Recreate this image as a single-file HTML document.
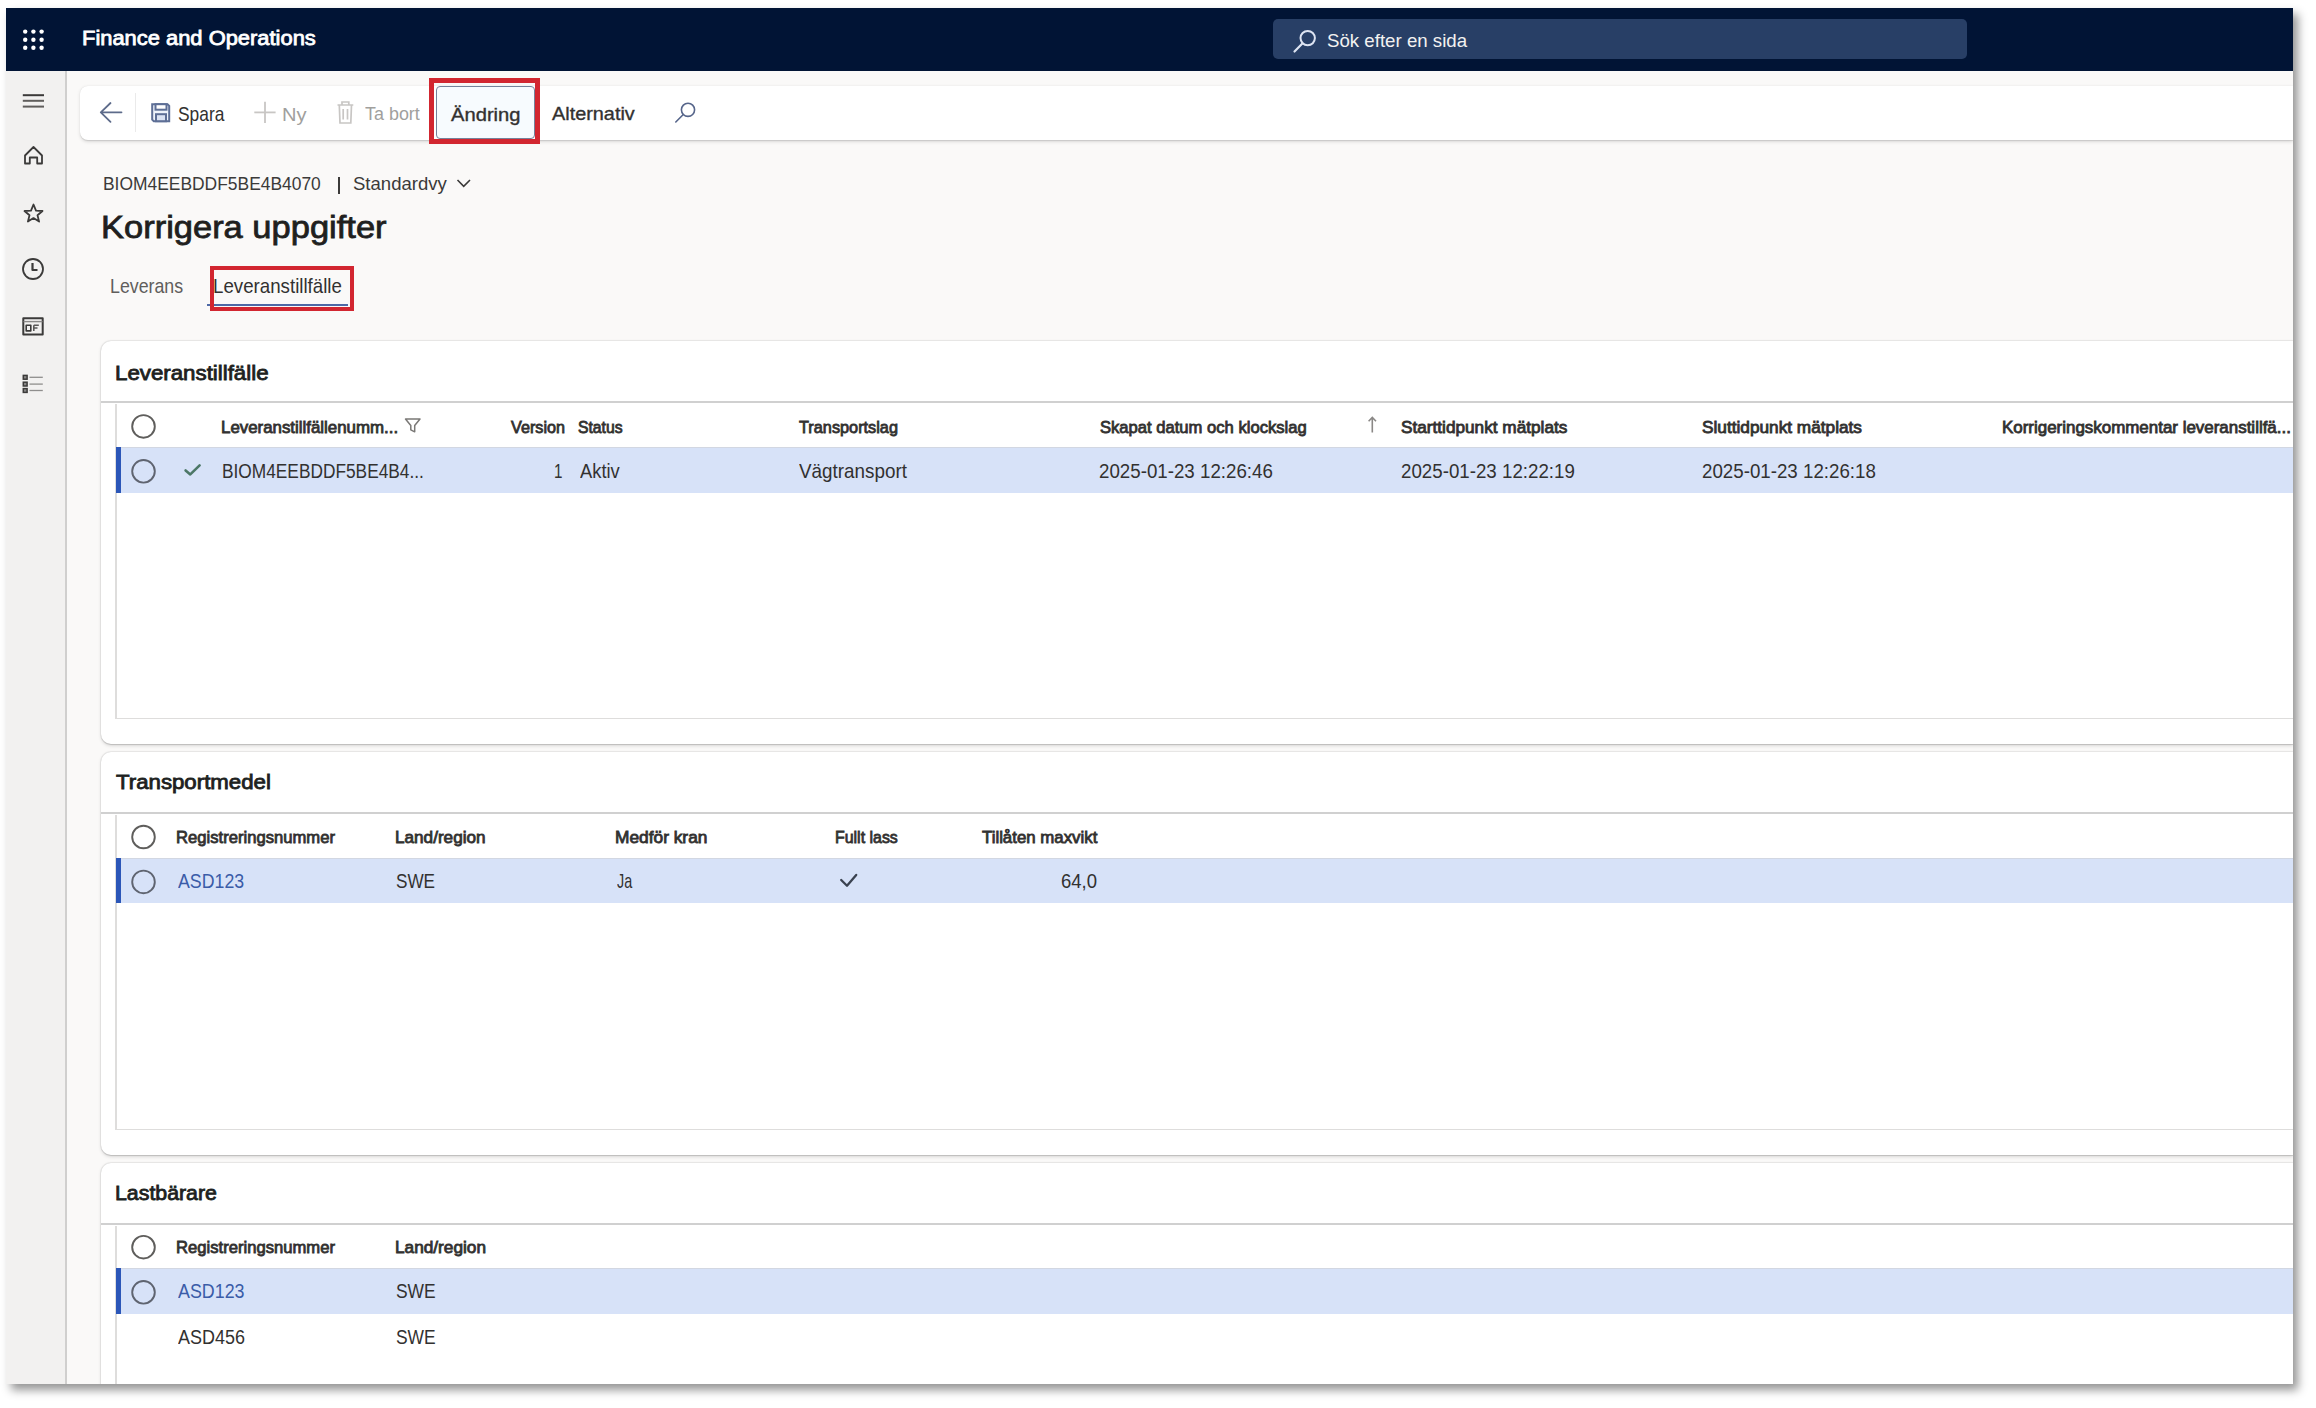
<!DOCTYPE html><html><head><meta charset="utf-8"><style>
html,body{margin:0;padding:0;}
body{width:2316px;height:1408px;overflow:hidden;position:relative;background:#fff;font-family:"Liberation Sans",sans-serif;}
.t{position:absolute;white-space:nowrap;transform-origin:0 0;}
#clip{position:absolute;left:6px;top:8px;width:2287px;height:1376px;overflow:hidden;}
#inner{position:absolute;left:-6px;top:-8px;width:2316px;height:1408px;}
.a{position:absolute;}
svg{position:absolute;overflow:visible;}
</style></head><body>
<div class="a" style="left:6px;top:8px;width:2287px;height:1376px;background:#faf9f8;box-shadow:5px 6px 9px rgba(0,0,0,0.42);"></div>
<div id="clip"><div id="inner">
<!-- window -->

<!-- top bar -->
<div class="a" style="left:6px;top:8px;width:2287px;height:63px;background:#011435;"></div>
<svg style="left:0;top:0" width="60" height="60">
<g fill="#ffffff">
<circle cx="25.2" cy="31.6" r="2.2"/><circle cx="33.4" cy="31.6" r="2.2"/><circle cx="41.6" cy="31.6" r="2.2"/>
<circle cx="25.2" cy="39.7" r="2.2"/><circle cx="33.4" cy="39.7" r="2.2"/><circle cx="41.6" cy="39.7" r="2.2"/>
<circle cx="25.2" cy="47.8" r="2.2"/><circle cx="33.4" cy="47.8" r="2.2"/><circle cx="41.6" cy="47.8" r="2.2"/>
</g></svg>
<div class="a" style="left:1273px;top:19px;width:694px;height:40px;border-radius:5px;background:#283f66;"></div>
<svg style="left:0;top:0" width="1400" height="80">
<circle cx="1307.7" cy="38.1" r="7.2" fill="none" stroke="#dde4f2" stroke-width="2"/>
<line x1="1294.5" y1="51.5" x2="1302.6" y2="43.3" stroke="#dde4f2" stroke-width="2.2" stroke-linecap="round"/>
</svg>
<!-- sidebar -->
<div class="a" style="left:6px;top:71px;width:60px;height:1313px;background:#f2f1f0;"></div>
<div class="a" style="left:65px;top:71px;width:1.8px;height:1313px;background:#d0cfce;"></div>
<svg style="left:0;top:0" width="70" height="420">
<g stroke="#3b3a39" stroke-width="2" fill="none">
<line x1="22.8" y1="95.2" x2="44" y2="95.2"/><line x1="22.8" y1="100.8" x2="44" y2="100.8" stroke="#605e5c"/><line x1="22.8" y1="106.6" x2="44" y2="106.6" stroke="#605e5c"/>
</g>
<g stroke="#3b3a39" stroke-width="1.8" fill="none" stroke-linejoin="round">
<!-- home -->
<path d="M25 155.5 L33.5 147 L42 155.5 V163.5 H37.2 V157.5 H29.8 V163.5 H25 Z"/>
<!-- star -->
<path d="M33.5 204.5 L36 210.6 L42.5 211 L37.5 215.2 L39.1 221.6 L33.5 218.1 L27.9 221.6 L29.5 215.2 L24.5 211 L31 210.6 Z"/>
<!-- clock -->
<circle cx="33" cy="269" r="10"/>
<path d="M32.5 263 V270 H37.5" stroke-width="2.2"/>
<!-- workspace -->
<rect x="23.3" y="318.2" width="19.4" height="16.3" stroke-width="2"/>
<line x1="23.5" y1="321.6" x2="42.5" y2="321.6" stroke="#8a8988" stroke-width="1.4"/>
<rect x="26.2" y="325.3" width="4.6" height="5.6" stroke-width="1.6"/>
<path d="M33.8 325.3 H38.8 M33.8 328 H37.5 M33.8 325.3 V331" stroke-width="1.6" stroke="#5a5958"/>
</g>
<g fill="#8a8988" stroke="#3b3a39" stroke-width="1.5">
<rect x="23.3" y="375.4" width="3.8" height="3.8"/><rect x="23.3" y="382.2" width="3.8" height="3.8"/><rect x="23.3" y="388.6" width="3.8" height="3.8"/>
</g>
<g stroke="#8f8e8d" stroke-width="1.3">
<line x1="29.5" y1="377.3" x2="42.8" y2="377.3"/><line x1="29.5" y1="384.1" x2="42.8" y2="384.1"/><line x1="29.5" y1="390.5" x2="42.8" y2="390.5"/>
</g>
</svg>
<!-- toolbar card -->
<div class="a" style="left:80px;top:85.5px;width:2213px;height:54px;border-radius:8px 0 0 8px;background:#ffffff;box-shadow:0 1.6px 3.6px rgba(0,0,0,0.12),0 0.3px 0.9px rgba(0,0,0,0.10);"></div>
<div class="a" style="left:135px;top:92.5px;width:1.2px;height:39px;background:#eaeaea;"></div>
<svg style="left:0;top:0" width="720" height="150">
<g stroke="#5d6b8a" stroke-width="1.8" fill="none" stroke-linecap="round" stroke-linejoin="round">
<path d="M121.5 112.3 H100.8 M110.5 103 L100.8 112.3 L110.5 121.8"/>
</g>
<!-- save -->
<g stroke="#5e6f96" stroke-width="2" fill="none">
<path d="M152.2 104.2 H167.5 L169.2 105.9 V121.2 H153.8 L152.2 119.6 Z" fill="#eef3fb"/>
<rect x="155.5" y="104.2" width="11" height="5.5" fill="#ffffff"/>
<rect x="156" y="114.2" width="10" height="7" fill="#dbe3f3"/>
</g>
<!-- plus -->
<g stroke="#c8c6c4" stroke-width="1.8">
<line x1="265" y1="101.8" x2="265" y2="123"/><line x1="254.3" y1="112.4" x2="275.6" y2="112.4"/>
</g>
<!-- trash -->
<g stroke="#c8c6c4" stroke-width="1.7" fill="none">
<path d="M337.5 105 H353.3 M342 105 V102 H348.8 V105 M339.3 105 L340 123 H350.8 L351.5 105 M343.2 109 V119.5 M347.5 109 V119.5"/>
</g>
<!-- search -->
<g stroke="#56658a" stroke-width="1.6" fill="none" stroke-linecap="round">
<circle cx="688" cy="109.8" r="6.6"/>
<line x1="675.8" y1="122" x2="683.3" y2="114.5"/>
</g>
</svg>
<!-- Andring button + red box -->
<div class="a" style="left:435.5px;top:85.5px;width:97.5px;height:51.5px;border:1.6px solid #75829b;border-radius:4px;background:#f7fbfe;"></div>
<div class="a" style="left:429px;top:78px;width:101px;height:56px;border:5px solid #d22630;"></div>
<!-- breadcrumb separators -->
<div class="a" style="left:338.2px;top:177px;width:1.8px;height:16.5px;background:#3b3a39;"></div>
<svg style="left:0;top:0" width="500" height="200">
<path d="M457.5 180 L463.7 186.3 L470 180" stroke="#3b3a39" stroke-width="1.6" fill="none"/>
</svg>
<!-- tabs underline + red box -->
<div class="a" style="left:207px;top:303.7px;width:140.5px;height:2.6px;background:#4d69a6;"></div>
<div class="a" style="left:210px;top:266px;width:136px;height:37px;border:4px solid #d22630;"></div>
<!-- panels -->
<div class="a" style="left:101px;top:341px;width:2192px;height:403px;border-radius:10px 0 0 10px;background:#ffffff;box-shadow:0 0 0 1px rgba(0,0,0,0.045),0 1.6px 3.6px rgba(0,0,0,0.13),0 0.3px 0.9px rgba(0,0,0,0.11);"></div>
<div class="a" style="left:101px;top:401.3px;width:2192px;height:2.2px;background:#d0d0d0;"></div>
<div class="a" style="left:115px;top:403.9px;width:1.5px;height:314.1px;background:#dedddc;"></div>
<div class="a" style="left:115px;top:717.5px;width:2178px;height:1.6px;background:#dedddc;"></div>
<div class="a" style="left:116.4px;top:447.3px;width:2177px;height:45.4px;background:#d7e2f8;"></div>
<div class="a" style="left:116.4px;top:447.0px;width:2177px;height:1.3px;background:#d2d7e2;"></div>
<div class="a" style="left:116.2px;top:447.3px;width:5.3px;height:45.4px;background:#2b56b8;"></div>
<svg style="left:0;top:0" width="200" height="1408"><circle cx="143.5" cy="426.4" r="11.3" fill="none" stroke="#5f5e5c" stroke-width="1.9"/><circle cx="143.5" cy="471.3" r="11.3" fill="none" stroke="#5f6470" stroke-width="1.9"/></svg>
<div class="a" style="left:101px;top:752px;width:2192px;height:403px;border-radius:10px 0 0 10px;background:#ffffff;box-shadow:0 0 0 1px rgba(0,0,0,0.045),0 1.6px 3.6px rgba(0,0,0,0.13),0 0.3px 0.9px rgba(0,0,0,0.11);"></div>
<div class="a" style="left:101px;top:812.3px;width:2192px;height:2.2px;background:#d0d0d0;"></div>
<div class="a" style="left:115px;top:814.9px;width:1.5px;height:314.1px;background:#dedddc;"></div>
<div class="a" style="left:115px;top:1128.5px;width:2178px;height:1.6px;background:#dedddc;"></div>
<div class="a" style="left:116.4px;top:857.9px;width:2177px;height:45.4px;background:#d7e2f8;"></div>
<div class="a" style="left:116.4px;top:857.6px;width:2177px;height:1.3px;background:#d2d7e2;"></div>
<div class="a" style="left:116.2px;top:857.9px;width:5.3px;height:45.4px;background:#2b56b8;"></div>
<svg style="left:0;top:0" width="200" height="1408"><circle cx="143.5" cy="837.0" r="11.3" fill="none" stroke="#5f5e5c" stroke-width="1.9"/><circle cx="143.5" cy="881.9" r="11.3" fill="none" stroke="#5f6470" stroke-width="1.9"/></svg>
<div class="a" style="left:101px;top:1163px;width:2192px;height:257px;border-radius:10px 0 0 10px;background:#ffffff;box-shadow:0 0 0 1px rgba(0,0,0,0.045),0 1.6px 3.6px rgba(0,0,0,0.13),0 0.3px 0.9px rgba(0,0,0,0.11);"></div>
<div class="a" style="left:101px;top:1223.3px;width:2192px;height:2.2px;background:#d0d0d0;"></div>
<div class="a" style="left:115px;top:1225.9px;width:1.5px;height:158.1px;background:#dedddc;"></div>
<div class="a" style="left:116.4px;top:1268.3px;width:2177px;height:45.4px;background:#d7e2f8;"></div>
<div class="a" style="left:116.4px;top:1268.0px;width:2177px;height:1.3px;background:#d2d7e2;"></div>
<div class="a" style="left:116.2px;top:1268.3px;width:5.3px;height:45.4px;background:#2b56b8;"></div>
<svg style="left:0;top:0" width="200" height="1408"><circle cx="143.5" cy="1247.2" r="11.3" fill="none" stroke="#5f5e5c" stroke-width="1.9"/><circle cx="143.5" cy="1292.3" r="11.3" fill="none" stroke="#5f6470" stroke-width="1.9"/></svg>
<svg style="left:0;top:0" width="1400" height="500">
<path d="M185.6 470.4 L190.3 474.4 L199.6 465.4" stroke="#4c7767" stroke-width="2.6" fill="none" stroke-linecap="round" stroke-linejoin="round"/>
<path d="M405.5 419 H420 L414.7 425.5 V431.8 L410.8 429.8 V425.5 Z" stroke="#7a7876" stroke-width="1.5" fill="none" stroke-linejoin="round"/>
<path d="M1372.3 432.5 V417.5 M1368.6 421.2 L1372.3 417.5 L1376 421.2" stroke="#8a8886" stroke-width="1.6" fill="none"/>
</svg>
<svg style="left:0;top:0" width="1000" height="900">
<path d="M841.2 880 L847 885.8 L856.2 875" stroke="#3a4250" stroke-width="2.3" fill="none" stroke-linecap="round" stroke-linejoin="round"/>
</svg>
<div class="t" style="left:82.00px;top:28.37px;font-size:20.581px;line-height:20.581px;transform:scaleX(1.0644);color:#ffffff;font-weight:normal;-webkit-text-stroke:0.80px #ffffff">Finance and Operations</div>
<div class="t" style="left:1327.00px;top:33.18px;font-size:17.733px;line-height:17.733px;transform:scaleX(1.0536);color:#f3f2f1;font-weight:normal">Sök efter en sida</div>
<div class="t" style="left:177.60px;top:105.18px;font-size:19.622px;line-height:19.622px;transform:scaleX(0.8859);color:#323130;font-weight:normal">Spara</div>
<div class="t" style="left:281.60px;top:104.95px;font-size:19.186px;line-height:19.186px;transform:scaleX(1.0472);color:#a19f9d;font-weight:normal">Ny</div>
<div class="t" style="left:365.40px;top:105.32px;font-size:18.750px;line-height:18.750px;transform:scaleX(0.9561);color:#a19f9d;font-weight:normal">Ta bort</div>
<div class="t" style="left:450.80px;top:105.67px;font-size:18.343px;line-height:18.343px;transform:scaleX(1.1009);color:#323130;font-weight:normal;-webkit-text-stroke:0.35px #323130">Ändring</div>
<div class="t" style="left:552.00px;top:105.30px;font-size:18.779px;line-height:18.779px;transform:scaleX(1.0581);color:#323130;font-weight:normal;-webkit-text-stroke:0.35px #323130">Alternativ</div>
<div class="t" style="left:102.60px;top:176.23px;font-size:17.442px;line-height:17.442px;transform:scaleX(0.9987);color:#3b3a39;font-weight:normal">BIOM4EEBDDF5BE4B4070</div>
<div class="t" style="left:353.20px;top:176.23px;font-size:17.442px;line-height:17.442px;transform:scaleX(1.0635);color:#3b3a39;font-weight:normal">Standardvy</div>
<div class="t" style="left:100.80px;top:212.09px;font-size:31.773px;line-height:31.773px;transform:scaleX(1.0853);color:#201f1e;font-weight:normal;-webkit-text-stroke:0.80px #201f1e">Korrigera uppgifter</div>
<div class="t" style="left:109.80px;top:276.66px;font-size:19.767px;line-height:19.767px;transform:scaleX(0.9004);color:#605e5c;font-weight:normal">Leverans</div>
<div class="t" style="left:213.00px;top:276.66px;font-size:19.767px;line-height:19.767px;transform:scaleX(0.9470);color:#323130;font-weight:normal">Leveranstillfälle</div>
<div class="t" style="left:115.00px;top:363.59px;font-size:19.855px;line-height:19.855px;transform:scaleX(1.1226);color:#201f1e;font-weight:normal;-webkit-text-stroke:0.80px #201f1e">Leveranstillfälle</div>
<div class="t" style="left:116.00px;top:773.31px;font-size:19.709px;line-height:19.709px;transform:scaleX(1.1292);color:#201f1e;font-weight:normal;-webkit-text-stroke:0.80px #201f1e">Transportmedel</div>
<div class="t" style="left:115.00px;top:1182.94px;font-size:20.145px;line-height:20.145px;transform:scaleX(1.0594);color:#201f1e;font-weight:normal;-webkit-text-stroke:0.80px #201f1e">Lastbärare</div>
<div class="t" style="left:220.80px;top:418.94px;font-size:16.366px;line-height:16.366px;transform:scaleX(1.0308);color:#323130;font-weight:normal;-webkit-text-stroke:0.80px #323130">Leveranstillfällenumm...</div>
<div class="t" style="left:511.00px;top:418.94px;font-size:16.366px;line-height:16.366px;transform:scaleX(0.9896);color:#323130;font-weight:normal;-webkit-text-stroke:0.80px #323130">Version</div>
<div class="t" style="left:578.20px;top:418.94px;font-size:16.366px;line-height:16.366px;transform:scaleX(0.9615);color:#323130;font-weight:normal;-webkit-text-stroke:0.80px #323130">Status</div>
<div class="t" style="left:799.00px;top:418.94px;font-size:16.366px;line-height:16.366px;transform:scaleX(0.9954);color:#323130;font-weight:normal;-webkit-text-stroke:0.80px #323130">Transportslag</div>
<div class="t" style="left:1099.80px;top:418.94px;font-size:16.366px;line-height:16.366px;transform:scaleX(1.0147);color:#323130;font-weight:normal;-webkit-text-stroke:0.80px #323130">Skapat datum och klockslag</div>
<div class="t" style="left:1401.00px;top:418.94px;font-size:16.366px;line-height:16.366px;transform:scaleX(1.0512);color:#323130;font-weight:normal;-webkit-text-stroke:0.80px #323130">Starttidpunkt mätplats</div>
<div class="t" style="left:1702.00px;top:418.94px;font-size:16.366px;line-height:16.366px;transform:scaleX(1.0532);color:#323130;font-weight:normal;-webkit-text-stroke:0.80px #323130">Sluttidpunkt mätplats</div>
<div class="t" style="left:2002.40px;top:418.94px;font-size:16.366px;line-height:16.366px;transform:scaleX(1.0350);color:#323130;font-weight:normal;-webkit-text-stroke:0.80px #323130">Korrigeringskommentar leveranstillfä...</div>
<div class="t" style="left:222.00px;top:461.17px;font-size:20.349px;line-height:20.349px;transform:scaleX(0.8508);color:#323130;font-weight:normal">BIOM4EEBDDF5BE4B4...</div>
<div class="t" style="left:554.40px;top:461.17px;font-size:20.349px;line-height:20.349px;transform:scaleX(0.7493);color:#323130;font-weight:normal">1</div>
<div class="t" style="left:580.40px;top:461.17px;font-size:20.349px;line-height:20.349px;transform:scaleX(0.9028);color:#323130;font-weight:normal">Aktiv</div>
<div class="t" style="left:799.00px;top:461.17px;font-size:20.349px;line-height:20.349px;transform:scaleX(0.9271);color:#323130;font-weight:normal">Vägtransport</div>
<div class="t" style="left:1099.00px;top:461.17px;font-size:20.349px;line-height:20.349px;transform:scaleX(0.9210);color:#323130;font-weight:normal">2025-01-23 12:26:46</div>
<div class="t" style="left:1401.00px;top:461.17px;font-size:20.349px;line-height:20.349px;transform:scaleX(0.9211);color:#323130;font-weight:normal">2025-01-23 12:22:19</div>
<div class="t" style="left:1702.00px;top:461.17px;font-size:20.349px;line-height:20.349px;transform:scaleX(0.9211);color:#323130;font-weight:normal">2025-01-23 12:26:18</div>
<div class="t" style="left:176.00px;top:828.94px;font-size:16.366px;line-height:16.366px;transform:scaleX(1.0163);color:#323130;font-weight:normal;-webkit-text-stroke:0.80px #323130">Registreringsnummer</div>
<div class="t" style="left:395.40px;top:828.94px;font-size:16.366px;line-height:16.366px;transform:scaleX(1.0482);color:#323130;font-weight:normal;-webkit-text-stroke:0.80px #323130">Land/region</div>
<div class="t" style="left:614.80px;top:828.94px;font-size:16.366px;line-height:16.366px;transform:scaleX(1.0585);color:#323130;font-weight:normal;-webkit-text-stroke:0.80px #323130">Medför kran</div>
<div class="t" style="left:835.20px;top:828.94px;font-size:16.366px;line-height:16.366px;transform:scaleX(0.9730);color:#323130;font-weight:normal;-webkit-text-stroke:0.80px #323130">Fullt lass</div>
<div class="t" style="left:981.60px;top:828.94px;font-size:16.366px;line-height:16.366px;transform:scaleX(1.0287);color:#323130;font-weight:normal;-webkit-text-stroke:0.80px #323130">Tillåten maxvikt</div>
<div class="t" style="left:178.40px;top:871.17px;font-size:20.349px;line-height:20.349px;transform:scaleX(0.8735);color:#3a5ca8;font-weight:normal">ASD123</div>
<div class="t" style="left:396.00px;top:871.17px;font-size:20.349px;line-height:20.349px;transform:scaleX(0.8433);color:#323130;font-weight:normal">SWE</div>
<div class="t" style="left:617.00px;top:871.17px;font-size:20.349px;line-height:20.349px;transform:scaleX(0.7080);color:#323130;font-weight:normal">Ja</div>
<div class="t" style="left:1061.00px;top:871.17px;font-size:20.349px;line-height:20.349px;transform:scaleX(0.9116);color:#323130;font-weight:normal">64,0</div>
<div class="t" style="left:176.00px;top:1238.94px;font-size:16.366px;line-height:16.366px;transform:scaleX(1.0163);color:#323130;font-weight:normal;-webkit-text-stroke:0.80px #323130">Registreringsnummer</div>
<div class="t" style="left:395.00px;top:1238.94px;font-size:16.366px;line-height:16.366px;transform:scaleX(1.0529);color:#323130;font-weight:normal;-webkit-text-stroke:0.80px #323130">Land/region</div>
<div class="t" style="left:178.00px;top:1281.17px;font-size:20.349px;line-height:20.349px;transform:scaleX(0.8789);color:#3a5ca8;font-weight:normal">ASD123</div>
<div class="t" style="left:396.00px;top:1281.17px;font-size:20.349px;line-height:20.349px;transform:scaleX(0.8568);color:#323130;font-weight:normal">SWE</div>
<div class="t" style="left:178.00px;top:1327.17px;font-size:20.349px;line-height:20.349px;transform:scaleX(0.8841);color:#323130;font-weight:normal">ASD456</div>
<div class="t" style="left:396.00px;top:1327.17px;font-size:20.349px;line-height:20.349px;transform:scaleX(0.8568);color:#323130;font-weight:normal">SWE</div>
</div></div></body></html>
